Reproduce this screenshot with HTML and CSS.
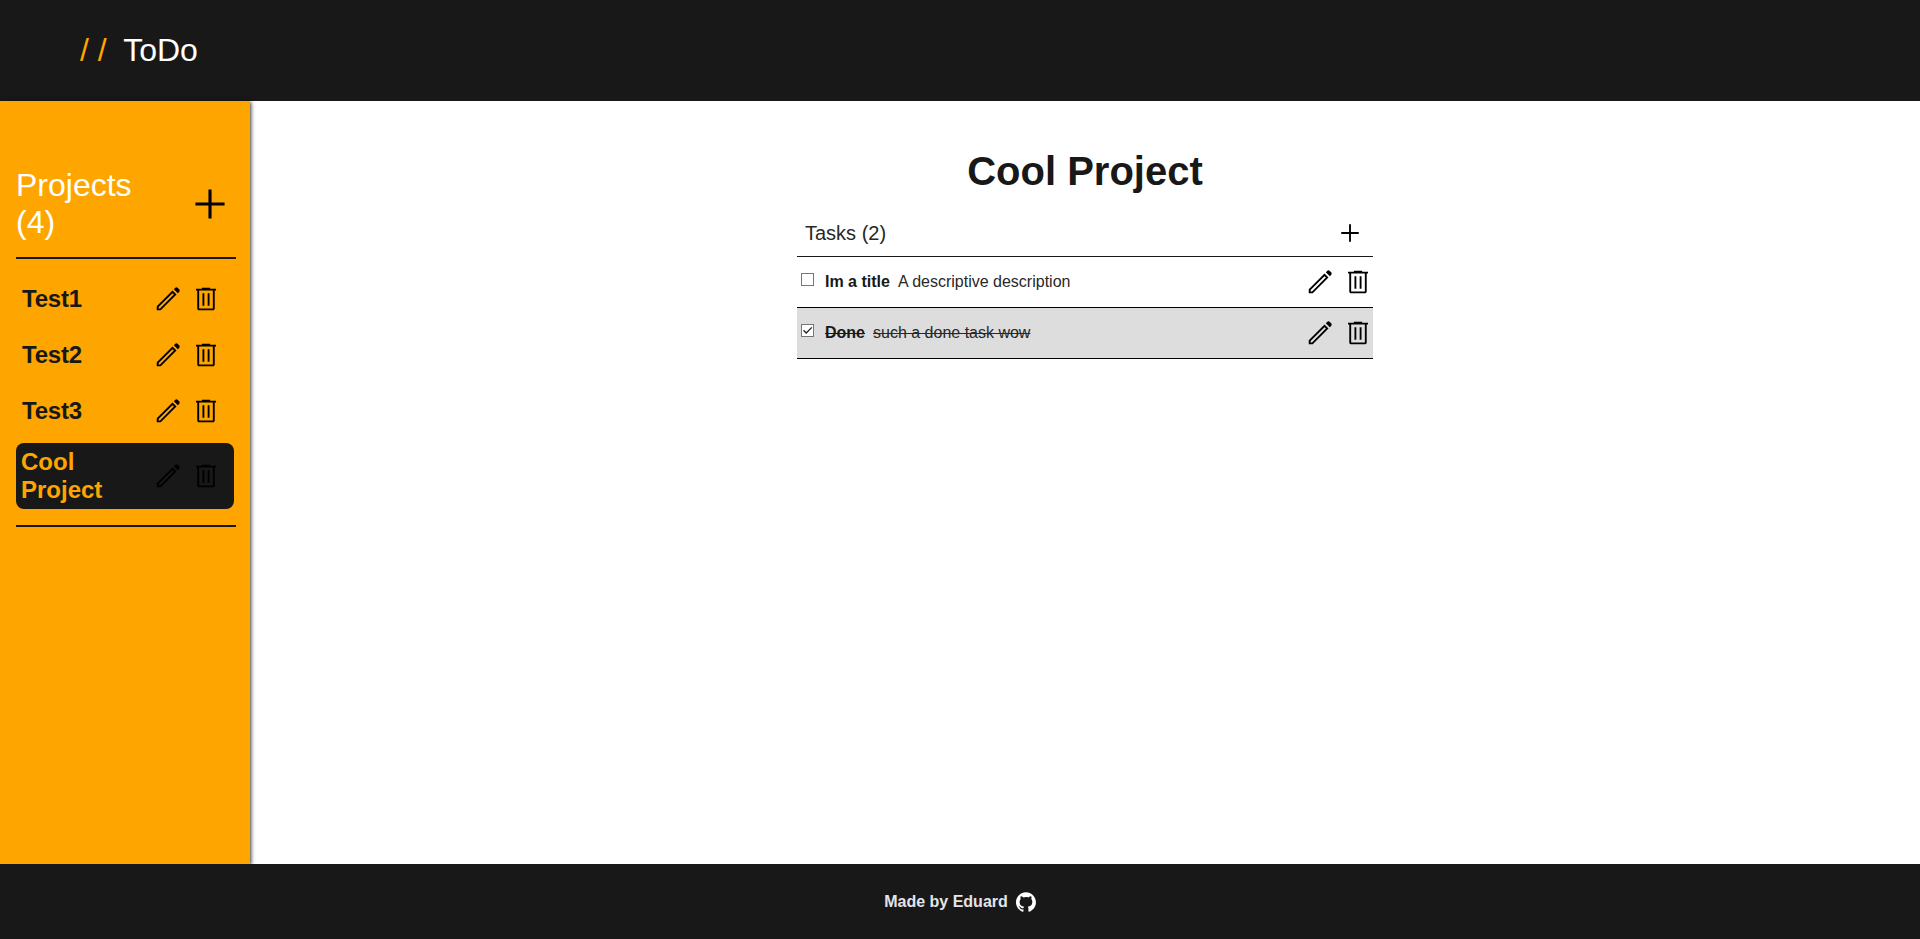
FILE: index.html
```html
<!DOCTYPE html>
<html lang="en">
<head>
<meta charset="utf-8">
<title>ToDo</title>
<link rel="stylesheet" href="styles.css">
</head>
<body>
<svg class="sprite" aria-hidden="true">
  <symbol id="edit" viewBox="0 -960 960 960"><path d="M180-180h44l443-443-44-44-443 443v44Zm614-486L666-794l42-42q17-17 42-17t42 17l44 44q17 17 17 42t-17 42l-42 42Zm-42 42L248-120H120v-128l504-504 128 128Zm-107-21-22-22 44 44-22-22Z"/></symbol>
  <symbol id="delete" viewBox="0 -960 960 960"><path d="M261-120q-24.75 0-42.375-17.625T201-180v-570h-41v-60h188v-30h264v30h188v60h-41v570q0 24-18 42t-42 18H261Zm438-630H261v570h438v-570ZM367-266h60v-399h-60v399Zm166 0h60v-399h-60v399Z"/></symbol>
  <symbol id="add" viewBox="0 -960 960 960"><path d="M450-200v-250H200v-60h250v-250h60v250h250v60H510v250h-60Z"/></symbol>
</svg>
<header class="header"><span class="slashes">/ /</span><span>ToDo</span></header>
<div class="content">
  <aside class="sidebar">
    <div class="projects-head">
      <span class="projects-title">Projects (4)</span>
      <svg class="icon-large"><use href="#add"/></svg>
    </div>
    <ul class="projects">
      <li class="project"><span class="name">Test1</span><svg class="icon"><use href="#edit"/></svg><svg class="icon"><use href="#delete"/></svg></li>
      <li class="project"><span class="name">Test2</span><svg class="icon"><use href="#edit"/></svg><svg class="icon"><use href="#delete"/></svg></li>
      <li class="project"><span class="name">Test3</span><svg class="icon"><use href="#edit"/></svg><svg class="icon"><use href="#delete"/></svg></li>
      <li class="project selected"><span class="name">Cool Project</span><svg class="icon"><use href="#edit"/></svg><svg class="icon"><use href="#delete"/></svg></li>
    </ul>
  </aside>
  <main class="main">
    <section class="board">
      <h1 class="board-title">Cool Project</h1>
      <div class="tasks-head"><span>Tasks (2)</span><svg class="icon"><use href="#add"/></svg></div>
      <div class="task">
        <span class="check"></span>
        <b class="task-title">Im a title</b><span class="task-desc">A descriptive description</span>
        <svg class="icon"><use href="#edit"/></svg><svg class="icon"><use href="#delete"/></svg>
      </div>
      <div class="task done">
        <span class="check"><svg class="tick" viewBox="0 0 11 11"><path d="M1.5 5.3 4.2 8 9.8 2.4"/></svg></span>
        <b class="task-title">Done</b><span class="task-desc">such a done task wow</span>
        <svg class="icon"><use href="#edit"/></svg><svg class="icon"><use href="#delete"/></svg>
      </div>
    </section>
  </main>
</div>
<footer class="footer"><span>Made by Eduard</span>
  <svg class="github" viewBox="0 0 98 96"><path fill-rule="evenodd" d="M48.854 0C21.839 0 0 22 0 49.217c0 21.756 13.993 40.172 33.405 46.69 2.427.49 3.316-1.059 3.316-2.362 0-1.141-.08-5.052-.08-9.127-13.59 2.934-16.42-5.867-16.42-5.867-2.184-5.704-5.42-7.17-5.42-7.17-4.448-3.015.324-3.015.324-3.015 4.934.326 7.523 5.052 7.523 5.052 4.367 7.496 11.404 5.378 14.235 4.074.404-3.178 1.699-5.378 3.074-6.6-10.839-1.141-22.243-5.378-22.243-24.283 0-5.378 1.94-9.778 5.014-13.2-.485-1.222-2.184-6.275.486-13.038 0 0 4.125-1.304 13.426 5.052a46.97 46.97 0 0 1 12.214-1.63c4.125 0 8.33.571 12.213 1.63 9.302-6.356 13.427-5.052 13.427-5.052 2.67 6.763.97 11.816.485 13.038 3.155 3.422 5.015 7.822 5.015 13.2 0 18.905-11.404 23.06-22.324 24.283 1.78 1.548 3.316 4.481 3.316 9.126 0 6.6-.08 11.897-.08 13.526 0 1.304.89 2.853 3.316 2.364 19.412-6.52 33.405-24.935 33.405-46.691C97.707 22 75.788 0 48.854 0z"/></svg>
</footer>
</body>
</html>
```
FILE: styles.css
```css
* { box-sizing: border-box; margin: 0; padding: 0; }
body {
  display: flex;
  flex-direction: column;
  height: 100vh;
  overflow: hidden;
  font-family: "Liberation Sans", Arial, sans-serif;
  font-size: 16px;
  color: #181818;
  background: #fff;
}
svg { display: block; flex: none; }
.sprite { display: none; }
.icon { width: 30px; height: 30px; fill: #000; }
.icon-large { width: 50px; height: 50px; margin-right: 1px; fill: #000; }

.header {
  display: flex;
  align-items: center;
  gap: 16.5px;
  height: 101px;
  padding-left: 80px;
  background: #181818;
  color: #fff;
  font-size: 32px;
}
.slashes { color: orange; }

.content { display: flex; flex: 1; }
.sidebar {
  width: 250px;
  padding: 66px 14px 0 16px;
  background: orange;
  box-shadow: 1px 1px 4px rgba(0, 0, 0, .8);
}
.projects-head {
  display: flex;
  align-items: center;
  justify-content: space-between;
  height: 92px;
  padding-bottom: 16px;
  border-bottom: 2px solid #181818;
  font-size: 32px;
  line-height: 37px;
  color: #fff;
}
.projects-title { width: 130px; }
.projects {
  display: flex;
  flex-direction: column;
  gap: 8px;
  padding: 16px 2px 16px 0;
  border-bottom: 2px solid #181818;
  list-style: none;
}
.project {
  display: flex;
  align-items: center;
  gap: 8px;
  min-height: 48px;
  padding: 5px 13px 5px 6px;
  border-radius: 8px;
  font-size: 24px;
  font-weight: bold;
  line-height: 28px;
  letter-spacing: -.2px;
}
.name { flex: 1; }
.selected { padding-left: 5px; background: #181818; color: orange; letter-spacing: 0; }

.main { flex: 1; padding-top: 46px; }
.board { width: 576px; margin: 0 auto; }
.board-title { font-size: 40px; line-height: 48px; text-align: center; }
.tasks-head {
  display: flex;
  align-items: center;
  justify-content: space-between;
  height: 47px;
  margin-top: 15px;
  padding: 0 8px;
  border-bottom: 1px solid #181818;
  font-size: 20px;
  color: #282828;
}
.task {
  display: flex;
  align-items: center;
  height: 51px;
  padding-left: 4px;
  border-bottom: 1px solid #000;
}
.check {
  width: 13px;
  height: 13px;
  margin: 0 11px 5px 0;
  border: 1px solid #767676;
  background: #fff;
}
.tick { width: 11px; height: 11px; fill: none; stroke: #222; stroke-width: 1.3; }
.task-title { margin-right: 8px; }
.task-desc { flex: 1; color: #282828; }
.task .icon + .icon { margin-left: 8px; }
.done { background: #ddd; }
.done .task-title, .done .task-desc { text-decoration: line-through; }
.done .task-desc { flex: none; margin-right: auto; }

.footer {
  display: flex;
  align-items: center;
  justify-content: center;
  gap: 8px;
  height: 75px;
  background: #181818;
  color: #e4e4e9;
  font-weight: bold;
}
.github { width: 20px; height: 20px; fill: #fff; }
```
